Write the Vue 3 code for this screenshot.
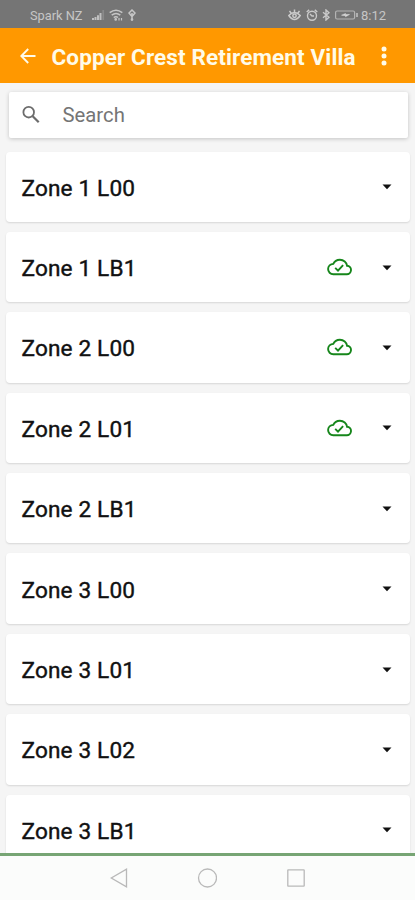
<script setup>
import { ref, computed } from 'vue';

const titulo = 'Copper Crest Retirement Villa';
const busqueda = ref('');

const zonas = ref([
  { nombre: 'Zone 1 L00', sincronizada: false },
  { nombre: 'Zone 1 LB1', sincronizada: true },
  { nombre: 'Zone 2 L00', sincronizada: true },
  { nombre: 'Zone 2 L01', sincronizada: true },
  { nombre: 'Zone 2 LB1', sincronizada: false },
  { nombre: 'Zone 3 L00', sincronizada: false },
  { nombre: 'Zone 3 L01', sincronizada: false },
  { nombre: 'Zone 3 L02', sincronizada: false },
  { nombre: 'Zone 3 LB1', sincronizada: false },
]);

// Filtramos las zonas según el texto de búsqueda
const zonasFiltradas = computed(() =>
  zonas.value.filter((z) => z.nombre.toLowerCase().includes(busqueda.value.toLowerCase()))
);
</script>

<template>
  <div class="pantalla">
    <!-- Barra de estado -->
    <div class="barra-estado">
      <span class="operador">Spark NZ</span>
      <svg class="ico-senal" width="13" height="12" viewBox="0 0 13 12">
        <path d="M1 11v-2M3.500 11V8M6 11V6.200M8.500 11V4" stroke="#c0c0c0" stroke-width="2" />
        <path d="M11.200 11V1" stroke="#8a8a8a" stroke-width="1.700" />
      </svg>
      <svg class="ico-wifi" width="14" height="12" viewBox="0 0 14 12" fill="none" stroke="#c6c6c6" stroke-width="1.500">
        <path d="M.7 3.700Q7-1.300 13.300 3.700M2.700 6.200Q7 2.800 11.300 6.200M4.700 8.500Q7 6.900 9 8.500" />
        <circle cx="6.700" cy="10.400" r=".6" />
        <path d="M10 9v2.500M12.500 9v2.500" stroke-width="1.200" />
      </svg>
      <svg class="ico-usb" width="8" height="12" viewBox="0 0 8 12" fill="none" stroke="#c6c6c6" stroke-width="1.500">
        <path d="M4 1L7 4 4 7.500 1 4zM4 4v7.500" />
        <circle cx="4" cy="10.500" r=".6" />
      </svg>
      <span class="espacio"></span>
      <svg class="ico-ojo" width="13" height="12" viewBox="0 0 13 12" fill="none" stroke="#cacaca" stroke-width="1.500">
        <path d="M.8 6.500Q6.500 14.500 12.200 6.500Q6.500 .5 .8 6.500zM6.500 3V.5M3 4L1.500 1.800M10 4l1.500-2.200" />
        <circle cx="6.500" cy="6.800" r="1.700" />
      </svg>
      <svg class="ico-alarma" width="12" height="12" viewBox="0 0 12 12" fill="none" stroke="#cacaca" stroke-width="1.400">
        <circle cx="6" cy="6.700" r="4.500" />
        <path d="M.7 3L3.200.9M11.300 3L8.800.9M4 5l2 2h2" />
      </svg>
      <svg class="ico-bt" width="8" height="12" viewBox="0 0 8 12" fill="none" stroke="#cacaca" stroke-width="1.400">
        <path d="M1 3.300l6 5L4 11V1l3 2.700-6 5" />
      </svg>
      <svg class="ico-bateria" width="23" height="10" viewBox="0 0 23 10">
        <rect x=".6" y="1" width="19" height="8" rx="1.500" fill="none" stroke="#b4b4b4" stroke-width="1.200" />
        <path d="M22 3v4" stroke="#cacaca" stroke-width="1.400" />
        <path d="M6.500 5.200l4-1.700v1h4l-4 2.200v-1z" fill="#d8d8d8" stroke="#d8d8d8" stroke-width=".5" />
      </svg>
      <span class="hora">8:12</span>
    </div>

    <!-- Encabezado -->
    <header class="encabezado">
      <button class="btn-icono btn-volver" aria-label="Back">
        <svg width="16" height="16" viewBox="0 0 16 16" fill="none" stroke="#fffbe8" stroke-width="1.900">
          <path d="M15.500 8H1.500M8.200 1L1.300 8l6.900 7" />
        </svg>
      </button>
      <h1>{{ titulo }}</h1>
      <button class="btn-icono btn-menu" aria-label="Menu">
        <svg width="6" height="22" viewBox="0 0 6 22" fill="#fffbe8">
          <circle cx="3" cy="4" r="2.500" />
          <circle cx="3" cy="11" r="2.500" />
          <circle cx="3" cy="18" r="2.500" />
        </svg>
      </button>
    </header>

    <main class="contenido">
      <div class="buscador">
        <svg width="18" height="18" viewBox="0 0 18 18" fill="none" stroke="#6c6c6c" stroke-width="1.800">
          <circle cx="6.700" cy="6.200" r="5.300" />
          <path d="M10.700 10.200l6 6" stroke-width="2.200" />
        </svg>
        <input v-model="busqueda" type="text" placeholder="Search">
      </div>

      <div class="tarjeta" v-for="zona in zonasFiltradas" :key="zona.nombre">
        <span class="nombre">{{ zona.nombre }}</span>
        <svg v-if="zona.sincronizada" class="nube" width="25" height="18" viewBox="0 0 25 18" fill="none" stroke="#16861b" stroke-width="1.900">
          <path d="M6.300 16.200h13.200a4.200 4.200 0 0 0 .6-8.400C19.700 4.300 16.600 1.700 12.900 1.700 9.900 1.700 7.400 3.300 6.300 5.900 3.400 6.100 1.100 8.300 1.100 11.100c0 2.900 2.300 5.100 5.200 5.100z" />
          <path d="M8.200 9.900l2.800 2.700 5.100-5.500" />
        </svg>
        <svg class="flecha" width="10" height="6" viewBox="0 0 10 6">
          <path d="M.5.500h9L5 5.300z" fill="#111" />
        </svg>
      </div>
    </main>

    <!-- Barra de navegación -->
    <nav class="navegacion">
      <svg width="18" height="20" viewBox="0 0 18 20" fill="none" stroke="#b9b9b9" stroke-width="1.300">
        <path d="M16.500 1.200v17.600L1.300 10z" />
      </svg>
      <svg width="20" height="20" viewBox="0 0 20 20" fill="none" stroke="#b9b9b9" stroke-width="1.300">
        <circle cx="10.500" cy="10" r="9" />
      </svg>
      <svg width="18" height="18" viewBox="0 0 18 18" fill="none" stroke="#b9b9b9" stroke-width="1.300">
        <rect x=".8" y=".8" width="16.400" height="16.400" rx=".5" />
      </svg>
    </nav>
  </div>
</template>

<style>
body {
  margin: 0;
  overflow: hidden;
}
</style>

<style scoped>
.pantalla {
  display: flex;
  flex-direction: column;
  height: 900px;
  background-color: #f5f5f5;
  font-family: Roboto, "Liberation Sans", sans-serif;
  overflow: hidden;
}
.barra-estado {
  display: flex;
  align-items: center;
  flex-shrink: 0;
  height: 28px;
  padding: 2px 28px 0 30px;
  box-sizing: border-box;
  background-color: #757575;
  color: #c6c6c6;
  font-size: 12.8px;
}
.operador {
  width: 54px;
  white-space: nowrap;
}
.ico-senal {
  margin-left: 8px;
}
.ico-wifi {
  margin-left: 4px;
}
.ico-usb {
  margin-left: 5px;
}
.espacio {
  flex: 1;
}
.ico-alarma {
  margin-left: 5px;
}
.ico-bt {
  margin-left: 4px;
}
.ico-bateria {
  margin-left: 5px;
}
.hora {
  width: 26px;
  margin-left: 3px;
  font-size: 13px;
  white-space: nowrap;
}
.encabezado {
  display: flex;
  align-items: center;
  flex-shrink: 0;
  height: 55px;
  padding: 0 28.5px 0 20px;
  box-sizing: border-box;
  background-color: #ff9800;
}
.btn-icono {
  display: flex;
  padding: 0;
  border: none;
  background: none;
}
.encabezado h1 {
  flex: 1;
  margin: 3px 0 0 15.5px;
  color: #fffbe8;
  font-size: 22.5px;
  font-weight: 700;
  letter-spacing: 0.12px;
  white-space: nowrap;
}
.contenido {
  flex: 1;
  min-height: 0;
  padding: 9px 5px 0 6px;
  overflow: hidden;
}
.buscador {
  display: flex;
  align-items: center;
  height: 46px;
  margin: 0 2px 13.5px 3px;
  padding-left: 13px;
  border-radius: 2px;
  background-color: #fff;
  box-shadow: 0 1px 4px rgba(0, 0, 0, 0.2);
}
.buscador input {
  flex: 1;
  min-width: 0;
  margin-left: 22.5px;
  padding: 0;
  border: none;
  outline: none;
  background: none;
  color: #333;
  font-family: inherit;
  font-size: 20.3px;
}
.buscador input::placeholder {
  color: #757575;
  opacity: 1;
}
.tarjeta {
  display: flex;
  align-items: center;
  height: 70.4px;
  margin-bottom: 10px;
  padding: 0 18px 0 15.5px;
  border-radius: 4px;
  background-color: #fff;
  box-shadow: 0 1px 2px rgba(0, 0, 0, 0.13);
}
.nombre {
  flex: 1;
  margin-top: 3px;
  color: #111;
  font-size: 22.6px;
  font-weight: 400;
  letter-spacing: 0.15px;
  -webkit-text-stroke: 0.4px #111;
}
.nube {
  margin: 0 30px 0 0;
}
.flecha {
  margin-top: 1px;
}
.navegacion {
  display: flex;
  align-items: center;
  justify-content: center;
  gap: 69.5px;
  flex-shrink: 0;
  height: 47px;
  padding-right: 1px;
  box-sizing: border-box;
  border-top: 3px solid #77a574;
  background-color: #fbfcfb;
}
</style>
